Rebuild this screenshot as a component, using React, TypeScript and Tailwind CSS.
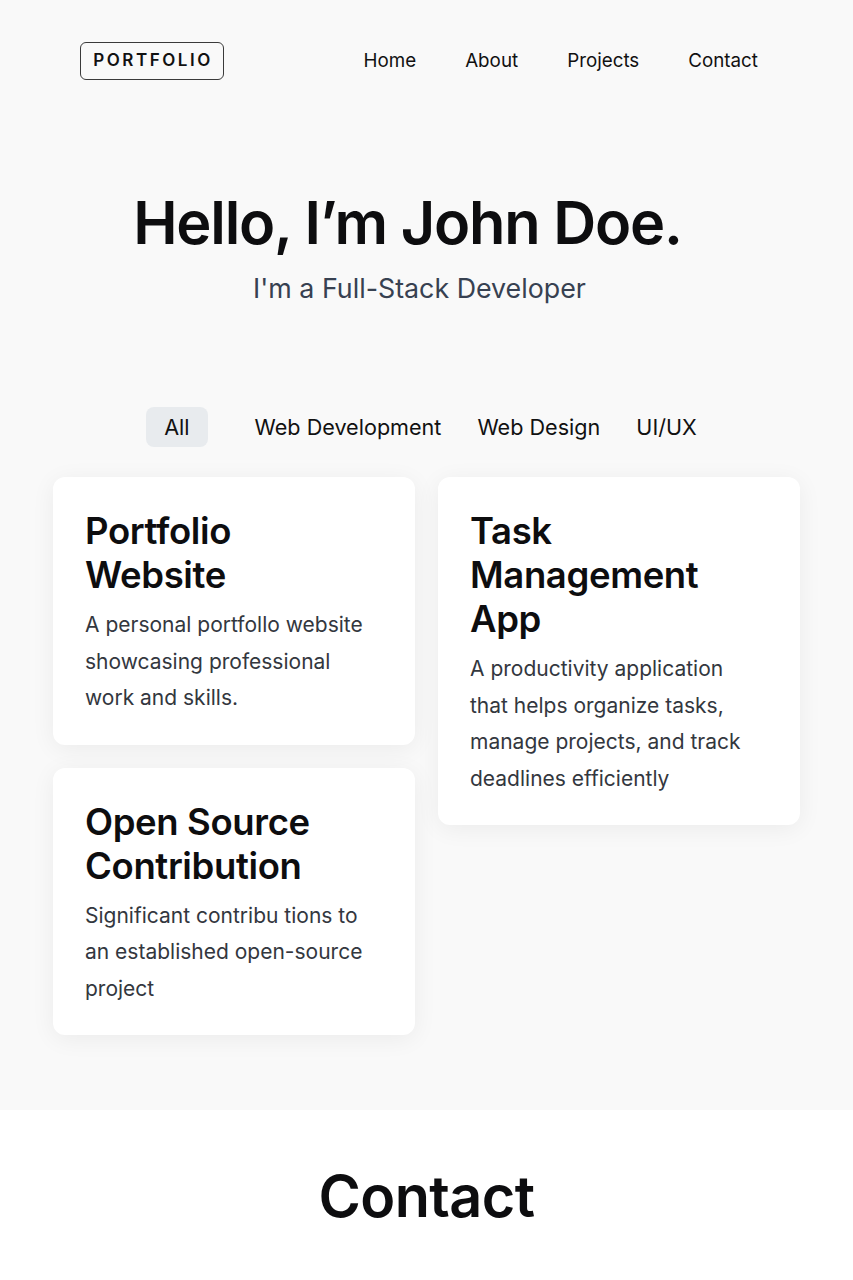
import React, { useState } from "react";

type Project = {
  id: number;
  title: string;
  description: string;
  category: string;
};

const projects: Project[] = [
  {
    id: 1,
    title: "Portfolio Website",
    description: "A personal portfollo website showcasing professional work and skills.",
    category: "Web Design",
  },
  {
    id: 2,
    title: "Task Management App",
    description:
      "A productivity application that helps organize tasks, manage projects, and track deadlines efficiently",
    category: "Web Development",
  },
  {
    id: 3,
    title: "Open Source Contribution",
    description: "Significant contribu tions to an established open-source project",
    category: "Web Development",
  },
];

const filters = ["All", "Web Development", "Web Design", "UI/UX"];

function ProjectCard({ project }: { project: Project }) {
  return (
    <div className="bg-white rounded-xl pt-8 pb-7 pl-8 pr-11 shadow-[0_4px_24px_rgba(0,0,0,0.06)]">
      <h3 className="text-[36.5px] leading-[44px] font-semibold text-[#0d0d0f] tracking-[-0.01em]">
        {project.title}
      </h3>
      <p className="mt-2.5 text-[21px] leading-[36.5px] text-[#33373e]">
        {project.description}
      </p>
    </div>
  );
}

export default function App() {
  const [active, setActive] = useState("All");

  const left = [projects[0], projects[2]];
  const right = [projects[1]];

  return (
    <div className="min-h-screen bg-[#f9f9f9] font-['Inter',sans-serif] text-[#111]">
      <header className="flex items-center justify-between pl-20 pr-[95px] pt-[42px]">
        <div className="h-[38px] w-[144px] flex items-center justify-center border-[1.5px] border-[#3a3a3a] rounded-md">
          <span className="text-[17px] font-semibold tracking-[0.15em] pl-[2px]">PORTFOLIO</span>
        </div>
        <nav className="flex items-center gap-[49px] text-[18.8px]">
          <a href="#">Home</a>
          <a href="#">About</a>
          <a href="#">Projects</a>
          <a href="#">Contact</a>
        </nav>
      </header>

      <section className="mt-[108px] text-center">
        <h1 className="text-[59.5px] leading-[68px] font-semibold tracking-[-0.02em] text-[#0d0d0f] pr-[38px]">
          Hello, I’m John Doe.
        </h1>
        <p className="mt-4 text-[26.8px] leading-[32px] text-[#374151] pr-[14px]">
          I'm a Full-Stack Developer
        </p>
      </section>

      <div className="mt-[103px] flex items-center justify-center gap-[36px] text-[21.6px] pr-[10px]">
        {filters.map((f) => (
          <button
            key={f}
            onClick={() => setActive(f)}
            className={
              active === f
                ? "h-10 px-[18px] rounded-lg bg-[#e8ebee] mr-[11px]"
                : "h-10"
            }
          >
            {f}
          </button>
        ))}
      </div>

      <div className="mt-[30px] mx-auto w-[747px] flex gap-[23px] items-start pb-[75px]">
        <div className="flex-1 flex flex-col gap-[23px]">
          {left.map((p) => (
            <ProjectCard key={p.id} project={p} />
          ))}
        </div>
        <div className="flex-1 flex flex-col gap-[23px]">
          {right.map((p) => (
            <ProjectCard key={p.id} project={p} />
          ))}
        </div>
      </div>

      <section className="bg-white pt-[52px] pb-[60px] text-center">
        <h2 className="text-[57.5px] leading-[68px] font-semibold tracking-[-0.01em] text-[#0d0d0f]">
          Contact
        </h2>
      </section>
    </div>
  );
}
